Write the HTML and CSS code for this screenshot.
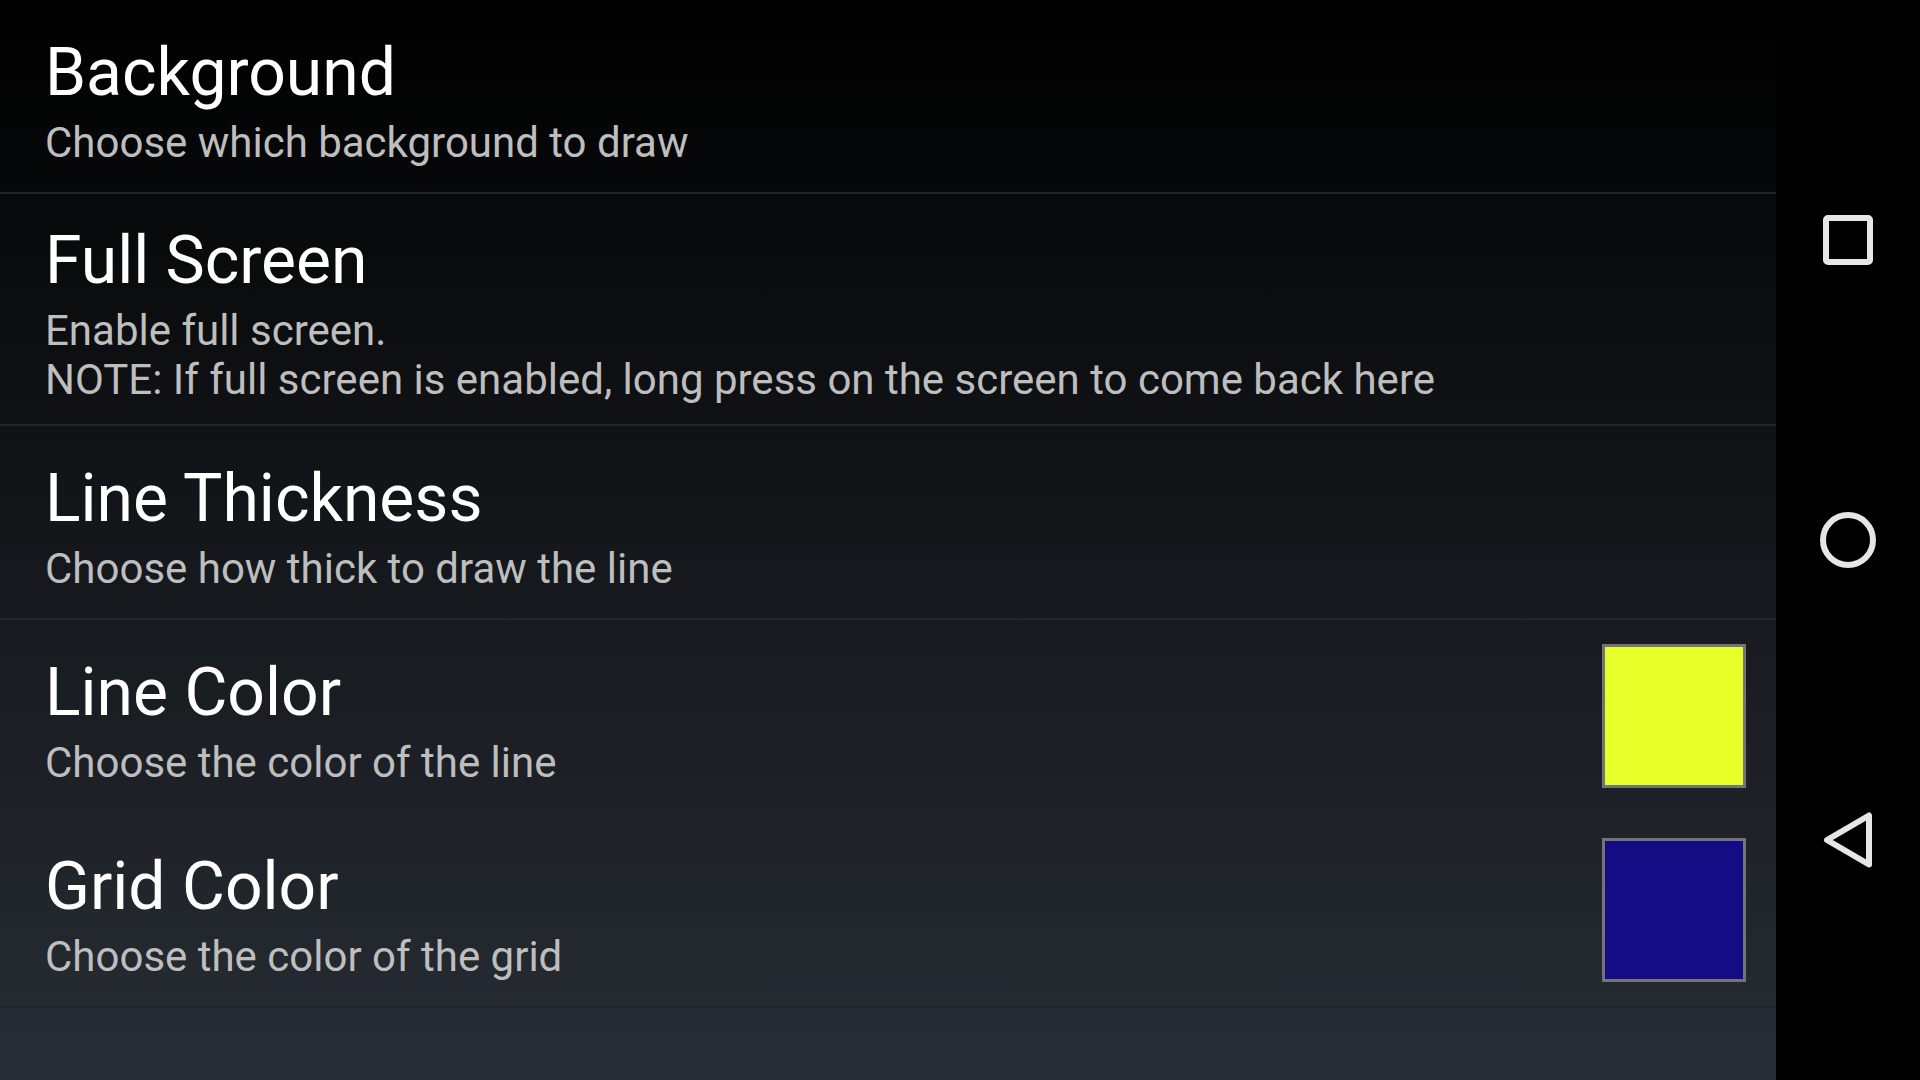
FILE: index.html
```
<!DOCTYPE html>
<html lang="en">
<head>
<meta charset="UTF-8">
<title>Settings</title>
<link rel="stylesheet" href="styles.css">
</head>
<body>

<main class="settings">
    <button class="row" type="button">
        <span class="text">
            <span class="title">Background</span>
            <span class="summary">Choose which background to draw</span>
        </span>
    </button>
    <button class="row" type="button">
        <span class="text">
            <span class="title">Full Screen</span>
            <span class="summary">Enable full screen.<br>NOTE: If full screen is enabled, long press on the screen to come back here</span>
        </span>
    </button>
    <button class="row" type="button">
        <span class="text">
            <span class="title">Line Thickness</span>
            <span class="summary">Choose how thick to draw the line</span>
        </span>
    </button>
    <label class="row" for="lineColor">
        <span class="text">
            <span class="title">Line Color</span>
            <span class="summary">Choose the color of the line</span>
        </span>
        <input class="swatch" type="color" id="lineColor" value="#e6ff29">
    </label>
    <label class="row" for="gridColor">
        <span class="text">
            <span class="title">Grid Color</span>
            <span class="summary">Choose the color of the grid</span>
        </span>
        <input class="swatch" type="color" id="gridColor" value="#130c85">
    </label>
</main>

<!-- system navigation -->
<nav class="navbar">
    <button class="nav-btn" type="button" aria-label="Recent apps">
        <svg class="icon" viewBox="0 0 72 72"><rect x="14" y="14" width="44" height="44" rx="2"/></svg>
    </button>
    <button class="nav-btn" type="button" aria-label="Home">
        <svg class="icon" viewBox="0 0 72 72"><circle cx="36" cy="36" r="25"/></svg>
    </button>
    <button class="nav-btn" type="button" aria-label="Back">
        <svg class="icon" viewBox="0 0 72 72"><path d="M57 11.5V60.5L15 36Z"/></svg>
    </button>
</nav>

</body>
</html>
```
FILE: styles.css
```
* {
    box-sizing: border-box;
}
body {
    margin: 0;
    min-height: 100vh;
    display: flex;
    background: #000;
    color: #fff;
    font-family: Roboto, sans-serif;
}
button {
    border: none;
    background: none;
    color: inherit;
    font: inherit;
    cursor: pointer;
}
.settings {
    flex: 1;
    display: flex;
    flex-direction: column;
    background: linear-gradient(#000, #282d35);
}
.row {
    display: flex;
    align-items: center;
    justify-content: space-between;
    width: 100%;
    min-height: 194px;
    padding: 20px 30px 20px 45px;
    border-bottom: 2px solid #222527;
    text-align: left;
    cursor: pointer;
}
.text {
    padding-top: 8px;
}
.title,
.summary {
    display: block;
}
.title {
    margin-bottom: 6px;
    font-size: 66px;
    line-height: 78px;
}
.summary {
    font-size: 42px;
    line-height: 49px;
    color: #bebebe;
}
.swatch {
    flex: none;
    width: 144px;
    height: 144px;
    padding: 0;
    border: 3px solid #737378;
    background: none;
    cursor: pointer;
}
.swatch::-webkit-color-swatch-wrapper {
    padding: 0;
}
.swatch::-webkit-color-swatch {
    border: none;
}
.navbar {
    width: 144px;
    display: flex;
    flex-direction: column;
    justify-content: center;
    background: #000;
}
.nav-btn {
    height: 300px;
    padding: 0;
    display: flex;
    align-items: center;
    justify-content: center;
}
.icon {
    width: 72px;
    height: 72px;
    fill: none;
    stroke: #e6e6e6;
    stroke-width: 6;
    stroke-linejoin: round;
}
```
